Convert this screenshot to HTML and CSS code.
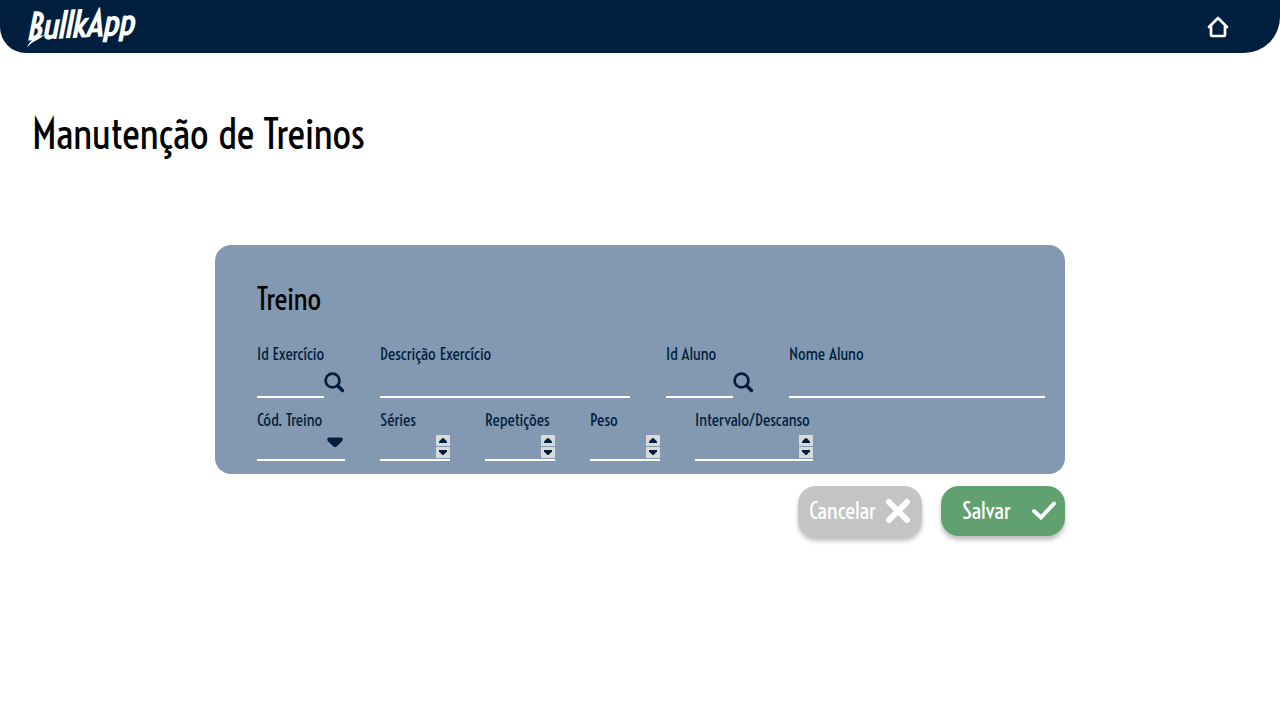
FILE: index.html
```html
<!DOCTYPE html>
<html lang="pt-BR">
<head>
  <meta charset="utf-8">
  <meta name="viewport" content="width=device-width, initial-scale=1">
  <title>BullkApp - Manutenção de Treinos</title>
  <link rel="stylesheet" href="styles.css">
</head>
<body>
  <header class="topbar">
    <a class="brand" href="#">BullkApp
      <svg class="brand-swash" width="18" height="12" viewBox="0 0 18 12" aria-hidden="true"><path d="M0 12C3 5 8 2 18 0C13 5 6 5 0 12Z" fill="#fff"/></svg>
    </a>
    <a class="home" href="#" aria-label="Início">
      <svg width="22" height="22" viewBox="0 0 22 22" fill="none" stroke="#fff" stroke-width="2.7" stroke-linecap="round" stroke-linejoin="round" aria-hidden="true"><path d="M2 11L11 2L20 11M4 9.500V18.500Q4 20 5.500 20H16.500Q18 20 18 18.500V9.500"/></svg>
    </a>
  </header>

  <main class="page">
    <h1 class="page-title">Manutenção de Treinos</h1>

    <form class="workout">
      <section class="panel">
        <h2 class="panel-title">Treino</h2>

        <div class="row row-lookup">
          <div class="field field-code">
            <label for="id-exercicio">Id Exercício</label>
            <div class="control">
              <input class="line" id="id-exercicio" type="text">
              <button class="search" type="button" aria-label="Buscar exercício"><svg width="21" height="21" viewBox="0 0 21 21" fill="none" stroke="#001e3e" stroke-linecap="round" aria-hidden="true"><circle cx="8.500" cy="8.500" r="6.900" stroke-width="2.700"/><path d="M13.700 13.700L18.500 18.500" stroke-width="3.400"/></svg></button>
            </div>
          </div>
          <div class="field field-exercise">
            <label for="desc-exercicio">Descrição Exercício</label>
            <div class="control"><input class="line" id="desc-exercicio" type="text"></div>
          </div>
          <div class="field field-code">
            <label for="id-aluno">Id Aluno</label>
            <div class="control">
              <input class="line" id="id-aluno" type="text">
              <button class="search" type="button" aria-label="Buscar aluno"><svg width="21" height="21" viewBox="0 0 21 21" fill="none" stroke="#001e3e" stroke-linecap="round" aria-hidden="true"><circle cx="8.500" cy="8.500" r="6.900" stroke-width="2.700"/><path d="M13.700 13.700L18.500 18.500" stroke-width="3.400"/></svg></button>
            </div>
          </div>
          <div class="field field-student">
            <label for="nome-aluno">Nome Aluno</label>
            <div class="control"><input class="line" id="nome-aluno" type="text"></div>
          </div>
        </div>

        <div class="row row-details">
          <div class="field field-select">
            <label for="cod-treino">Cód. Treino</label>
            <div class="control boxed">
              <select class="bare" id="cod-treino"><option></option></select>
              <svg class="caret" width="16" height="11" viewBox="0 0 16 11" aria-hidden="true"><path d="M2 .5H14Q16 .5 15.800 2.500Q15.500 4 14 5.200L9.500 9.500Q8 10.700 6.500 9.500L2 5.200Q.5 4 .2 2.500Q0 .5 2 .5Z" fill="#001e3e"/></svg>
            </div>
          </div>
          <div class="field field-number">
            <label for="series">Séries</label>
            <div class="control boxed">
              <input class="bare" id="series" type="number">
              <div class="stepper">
                <button type="button" aria-label="Aumentar séries"><svg width="8" height="5" viewBox="0 0 8 5" aria-hidden="true"><path d="M0 5V3.500L3 .5Q4-.5 5 .5L8 3.500V5Z"/></svg></button>
                <button type="button" aria-label="Diminuir séries"><svg width="8" height="5" viewBox="0 0 8 5" aria-hidden="true"><path d="M0 0V1.500L3 4.500Q4 5.500 5 4.500L8 1.500V0Z"/></svg></button>
              </div>
            </div>
          </div>
          <div class="field field-number">
            <label for="repeticoes">Repetições</label>
            <div class="control boxed">
              <input class="bare" id="repeticoes" type="number">
              <div class="stepper">
                <button type="button" aria-label="Aumentar repetições"><svg width="8" height="5" viewBox="0 0 8 5" aria-hidden="true"><path d="M0 5V3.500L3 .5Q4-.5 5 .5L8 3.500V5Z"/></svg></button>
                <button type="button" aria-label="Diminuir repetições"><svg width="8" height="5" viewBox="0 0 8 5" aria-hidden="true"><path d="M0 0V1.500L3 4.500Q4 5.500 5 4.500L8 1.500V0Z"/></svg></button>
              </div>
            </div>
          </div>
          <div class="field field-number">
            <label for="peso">Peso</label>
            <div class="control boxed">
              <input class="bare" id="peso" type="number">
              <div class="stepper">
                <button type="button" aria-label="Aumentar peso"><svg width="8" height="5" viewBox="0 0 8 5" aria-hidden="true"><path d="M0 5V3.500L3 .5Q4-.5 5 .5L8 3.500V5Z"/></svg></button>
                <button type="button" aria-label="Diminuir peso"><svg width="8" height="5" viewBox="0 0 8 5" aria-hidden="true"><path d="M0 0V1.500L3 4.500Q4 5.500 5 4.500L8 1.500V0Z"/></svg></button>
              </div>
            </div>
          </div>
          <div class="field field-interval">
            <label for="intervalo">Intervalo/Descanso</label>
            <div class="control boxed">
              <input class="bare" id="intervalo" type="number">
              <div class="stepper">
                <button type="button" aria-label="Aumentar intervalo"><svg width="8" height="5" viewBox="0 0 8 5" aria-hidden="true"><path d="M0 5V3.500L3 .5Q4-.5 5 .5L8 3.500V5Z"/></svg></button>
                <button type="button" aria-label="Diminuir intervalo"><svg width="8" height="5" viewBox="0 0 8 5" aria-hidden="true"><path d="M0 0V1.500L3 4.500Q4 5.500 5 4.500L8 1.500V0Z"/></svg></button>
              </div>
            </div>
          </div>
        </div>
      </section>

      <div class="actions">
        <button class="action cancel" type="button">Cancelar
          <svg width="26" height="26" viewBox="0 0 26 26" aria-hidden="true"><path d="M4 4L22 22M22 4L4 22" fill="none" stroke="#fff" stroke-width="6" stroke-linecap="round"/></svg>
        </button>
        <button class="action save" type="submit">Salvar
          <svg width="26" height="26" viewBox="0 0 26 26" aria-hidden="true"><path d="M3 13L10 19.500L23 5.500" fill="none" stroke="#fff" stroke-width="4" stroke-linecap="round" stroke-linejoin="miter"/></svg>
        </button>
      </div>
    </form>
  </main>
</body>
</html>
```

FILE: styles.css
```css
* {
  box-sizing: border-box;
}

body {
  min-height: 100vh;
  margin: 0;
  background: #fff;
  color: #000;
  font-family: "Voltaire", "Liberation Sans Narrow", "Roboto Condensed", "Liberation Sans", sans-serif;
}

button,
input,
select {
  font: inherit;
  color: inherit;
  margin: 0;
  padding: 0;
  border: 0;
  border-radius: 0;
  background: none;
}

svg {
  display: block;
  flex: none;
}

.topbar {
  display: flex;
  align-items: center;
  justify-content: space-between;
  height: 53px;
  padding: 0 51px 0 26px;
  background: #001e3e;
  border-radius: 0 0 36px 26px;
}

.brand {
  position: relative;
  padding-bottom: 6px;
  color: #fff;
  font-size: 35px;
  font-style: italic;
  font-weight: 700;
  line-height: 36px;
  text-decoration: none;
  transform: rotate(-3deg);
}

.brand-swash {
  position: absolute;
  left: 0;
  bottom: 3px;
}

.page {
  padding: 56px 32px 32px;
}

.page-title {
  margin: 0;
  font-size: 41px;
  font-weight: 400;
  line-height: 52px;
}

.workout {
  max-width: 850px;
  margin: 84px auto 0;
}

.panel {
  padding: 36px 20px 13px 42px;
  background: #8299b1;
  border-radius: 16px;
}

.panel-title {
  margin: 0 0 26px;
  font-size: 30px;
  font-weight: 400;
  line-height: 36px;
}

.row {
  display: flex;
  color: #001e3e;
}

.row-lookup {
  gap: 36px;
}

.row-details {
  gap: 35px;
  margin-top: 11px;
}

.field {
  display: flex;
  flex-direction: column;
  gap: 5px;
  min-width: 0;
  font-size: 17px;
  line-height: 22px;
}

.row-details .field {
  gap: 3px;
}

.field label {
  white-space: nowrap;
}

.field-code {
  flex: none;
  width: 87px;
}

.field-select {
  flex: none;
  width: 88px;
}

.field-exercise {
  flex: 250;
}

.field-student {
  flex: 256;
}

.field-number {
  flex: none;
  width: 70px;
}

.field-interval {
  flex: none;
  width: 118px;
}

.control {
  display: flex;
  align-items: flex-start;
}

.line {
  flex: 1;
  min-width: 0;
  height: 28px;
  border-bottom: 2px solid #fff;
}

.search {
  width: 20px;
  padding-top: 2px;
}

.boxed {
  position: relative;
  height: 27px;
  border-bottom: 2px solid #fff;
}

.bare {
  flex: 1;
  min-width: 0;
  height: 24px;
  appearance: none;
}

input[type="number"] {
  appearance: textfield;
}

.caret {
  position: absolute;
  top: 3px;
  right: 2px;
  pointer-events: none;
}

.stepper {
  display: grid;
  gap: 1px;
  padding-top: 1px;
}

.stepper button {
  display: grid;
  place-items: center;
  width: 14px;
  height: 11px;
  background: #d9d9d9;
  fill: #001e3e;
}

.actions {
  display: flex;
  align-items: flex-start;
  justify-content: flex-end;
  gap: 19px;
  margin-top: 12px;
}

.action {
  display: flex;
  align-items: center;
  justify-content: space-between;
  width: 124px;
  height: 50px;
  border-radius: 18px;
  color: #fff;
  font-size: 23px;
  line-height: 28px;
  box-shadow: 0 4px 4px rgba(0, 0, 0, 0.25);
}

.cancel {
  height: 51px;
  padding: 0 11px 1px;
  background: #c4c4c4;
}

.save {
  padding: 0 8px 0 21px;
  background: #61a06f;
}
```
